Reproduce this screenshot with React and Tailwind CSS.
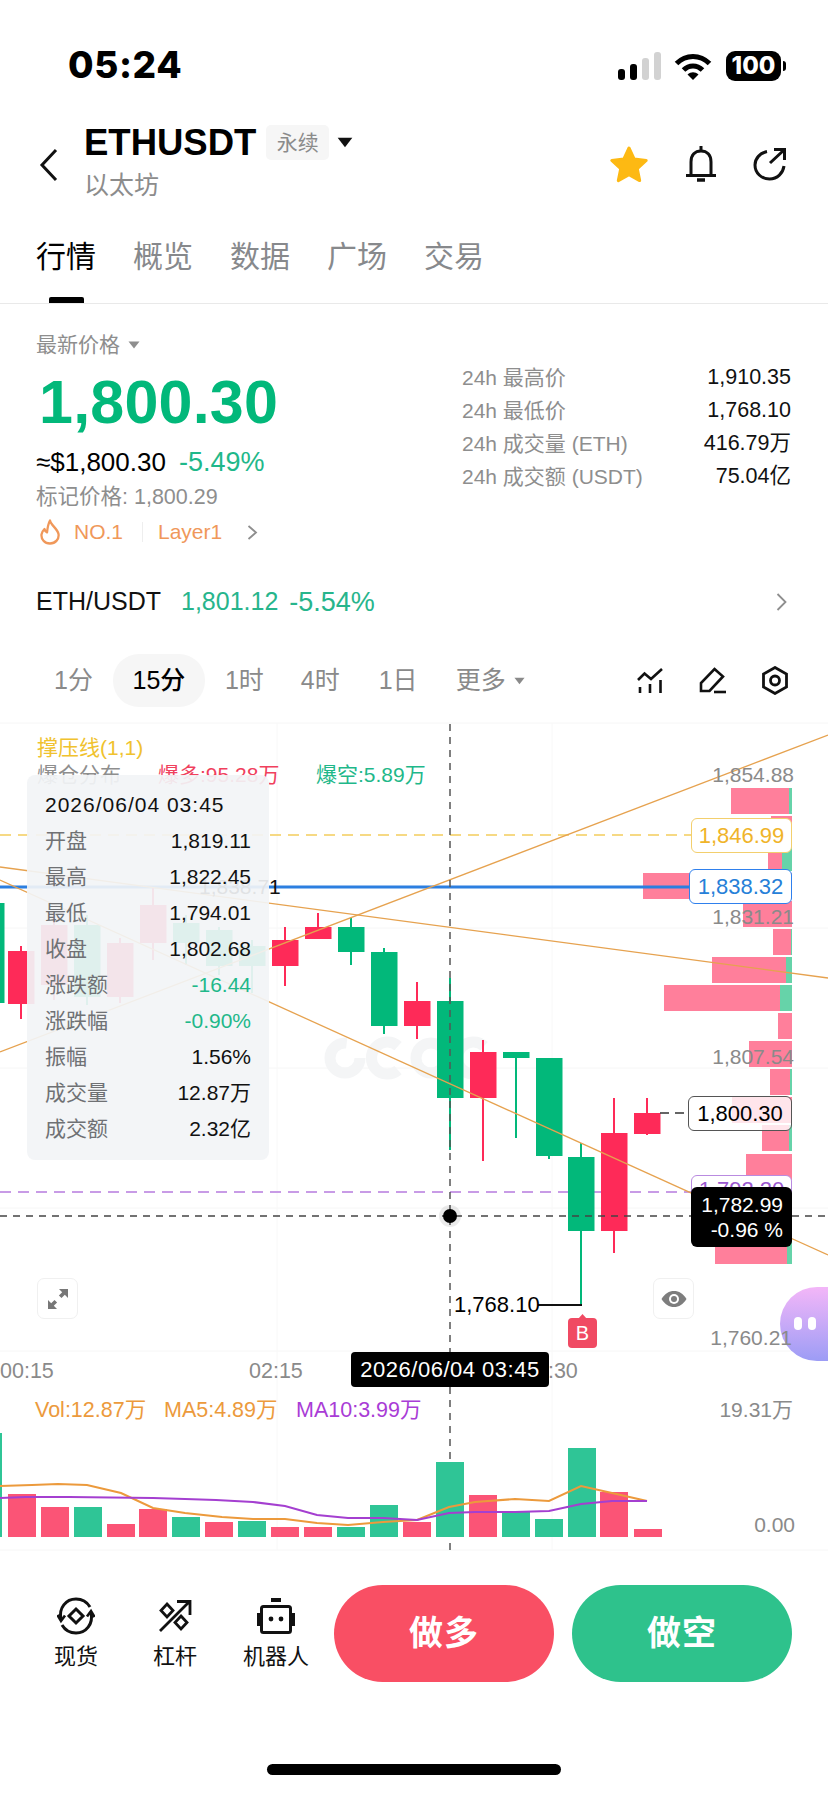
import React from 'react';

const FONT = "font-['Liberation_Sans','Noto_Sans_CJK_SC',sans-serif]";

const RED = '#fe2a58';
const GREEN = '#02b87a';

// x, bodyTop, bodyBottom, wickTop, wickBottom, colour
const candles = [
  [-22, 903, 1003, 890, 1020, GREEN],
  [8, 951, 1004, 946, 1019, RED],
  [41, 925, 985, 915, 1000, RED],
  [74, 925, 997, 915, 1005, GREEN],
  [107, 943, 997, 938, 1003, RED],
  [140, 905, 943, 887, 960, RED],
  [173, 923, 943, 915, 965, GREEN],
  [206, 930, 966, 927, 975, GREEN],
  [239, 946, 966, 940, 993, GREEN],
  [272, 940, 966, 927, 986, RED],
  [305, 927, 939, 913, 939, RED],
  [338, 927, 952, 918, 965, GREEN],
  [371, 952, 1026, 948, 1034, GREEN],
  [404, 1001, 1026, 982, 1039, RED],
  [437, 1001, 1098, 978, 1150, GREEN],
  [470, 1052, 1098, 1040, 1161, RED],
  [503, 1052, 1058, 1052, 1138, GREEN],
  [536, 1058, 1156, 1058, 1159, GREEN],
  [568, 1157, 1231, 1143, 1305, GREEN],
  [601, 1133, 1231, 1098, 1253, RED],
  [634, 1113, 1134, 1098, 1135, RED],
];

// top, pink start x, green start x
const depthBars = [
  [788, 731, 789],
  [816, 771, 792],
  [845, 768, 782],
  [873, 643, 792],
  [901, 743, 792],
  [929, 773, 791],
  [957, 712, 786],
  [985, 664, 780],
  [1013, 778, 792],
  [1041, 749, 792],
  [1069, 770, 790],
  [1097, 732, 792],
  [1125, 762, 789],
  [1154, 746, 792],
  [1238, 715, 787],
];

// x, top, colour
const volumes = [
  [-26, 1433, 'g'], [8, 1494, 'r'], [41, 1507, 'r'], [74, 1507, 'g'], [107, 1524, 'r'],
  [139, 1509, 'r'], [172, 1517, 'g'], [205, 1522, 'r'], [238, 1521, 'g'], [271, 1527, 'r'],
  [304, 1527, 'r'], [337, 1527, 'g'], [370, 1505, 'g'], [403, 1522, 'r'], [436, 1462, 'g'],
  [469, 1495, 'r'], [502, 1512, 'g'], [535, 1519, 'g'], [568, 1448, 'g'], [600, 1492, 'r'],
  [634, 1529, 'r'],
];

const ma5 = '0,1486 32,1485 58,1484 87,1485 121,1493 153,1508 185,1513 222,1517 253,1519 285,1519 317,1523 348,1525 383,1522 417,1520 449,1507 475,1502 515,1499 549,1501 581,1486 612,1493 647,1501';
const ma10 = '0,1498 26,1497 69,1497 153,1498 185,1499 216,1500 253,1502 285,1506 317,1515 348,1518 383,1518 417,1520 449,1513 475,1512 515,1512 549,1511 581,1504 612,1501 647,1501';

const tooltipRows = [
  ['开盘', '1,819.11', 'text-[#111]'],
  ['最高', '1,822.45', 'text-[#111]'],
  ['最低', '1,794.01', 'text-[#111]'],
  ['收盘', '1,802.68', 'text-[#111]'],
  ['涨跌额', '-16.44', 'text-[#1fb88a]'],
  ['涨跌幅', '-0.90%', 'text-[#1fb88a]'],
  ['振幅', '1.56%', 'text-[#111]'],
  ['成交量', '12.87万', 'text-[#111]'],
  ['成交额', '2.32亿', 'text-[#111]'],
];

const stats = [
  ['24h 最高价', '1,910.35'],
  ['24h 最低价', '1,768.10'],
  ['24h 成交量 (ETH)', '416.79万'],
  ['24h 成交额 (USDT)', '75.04亿'],
];

const Caret = ({ className, fill }) => (
  <svg viewBox="0 0 12 8" className={className}>
    <path d="M0.5 0.5h11L6 7.5z" fill={fill} />
  </svg>
);

const StatusBar = () => (
  <div className="flex h-[104px] items-start justify-between pl-[68px] pr-[42px] pt-[50px]">
    <span className="font-['Inter',sans-serif] text-[37px] leading-[30px] font-extrabold tracking-[0.6px] text-black">05:24</span>
    <div className="flex items-center gap-[14px] pt-[1px]">
      <svg viewBox="0 0 44 28" className="mr-[-2px] h-[28px] w-[44px]">
        <rect x="0" y="17" width="7" height="11" rx="3" fill="#000" />
        <rect x="12" y="12" width="7" height="16" rx="3" fill="#000" />
        <rect x="24" y="6" width="7" height="22" rx="3" fill="#d2d2d2" />
        <rect x="36" y="0" width="7" height="28" rx="3" fill="#d2d2d2" />
      </svg>
      <svg viewBox="0 0 38 27" className="h-[27px] w-[38px]">
        <path d="M2.5 10.5C12 1 26 1 35.5 10.5" fill="none" stroke="#000" strokeWidth="5" />
        <path d="M9.5 17C15 11.5 23 11.5 28.5 17" fill="none" stroke="#000" strokeWidth="5" />
        <path d="M13.5 21.5C17 18.5 21 18.5 24.5 21.5L19 27z" fill="#000" />
      </svg>
      <div className="flex items-center gap-[2px]">
        <div className="flex h-[30px] w-[55px] items-center justify-center rounded-[9px] bg-black font-['Inter',sans-serif] text-[24px] leading-none font-extrabold text-white">100</div>
        <div className="h-[10px] w-[3px] rounded-r-full bg-black" />
      </div>
    </div>
  </div>
);

const Header = () => (
  <div className="flex h-[116px] items-start pt-[20px] pl-[39px] pr-[41px]">
    <svg viewBox="0 0 19 34" className="mt-[24px] h-[34px] w-[19px] shrink-0">
      <path d="M17 2 3 17l14 15" fill="none" stroke="#111" strokeWidth="3" />
    </svg>
    <div className="ml-[26px] flex flex-col">
      <div className="flex h-[37px] items-center">
        <span className="text-[36.500px] leading-[37px] font-bold text-black">ETHUSDT</span>
        <span className="ml-[10px] flex h-[35px] w-[63px] items-center justify-center rounded-[5px] bg-[#f6f6f6] text-[21px] text-[#8b8b8b]">永续</span>
        <Caret className="ml-[8px] h-[11px] w-[16px]" fill="#111" />
      </div>
      <span className="mt-[9px] text-[25px] leading-[30px] text-[#8c8c8c]">以太坊</span>
    </div>
    <div className="ml-auto mt-[21px] flex items-center gap-[36px]">
      <svg viewBox="0 0 40 38" className="h-[38px] w-[40px]">
        <path d="M20 3l5.2 11.1 12 1.4-8.9 8.2 2.4 11.9L20 29.7 9.3 35.6l2.4-11.9-8.9-8.2 12-1.4z" fill="#fdb913" stroke="#fdb913" strokeWidth="3" strokeLinejoin="round" />
      </svg>
      <svg viewBox="0 0 32 38" className="h-[38px] w-[32px]">
        <path d="M6 30V17C6 10 10 6 16 6s10 4 10 11v13" fill="none" stroke="#111" strokeWidth="3" />
        <path d="M1 30.5h30M16 1v5" fill="none" stroke="#111" strokeWidth="3" />
        <path d="M12 35h8" fill="none" stroke="#111" strokeWidth="3.5" />
      </svg>
      <svg viewBox="0 0 34 34" className="h-[34px] w-[34px]">
        <path d="M14 4.5C7 6 2 11.500 2 18c0 8 6.500 14 14.500 14S30 26 31 19" fill="none" stroke="#111" strokeWidth="3" />
        <path d="M17 16 31 3M21 2.500h10.500V13" fill="none" stroke="#111" strokeWidth="3" />
      </svg>
    </div>
  </div>
);

const Tabs = () => (
  <div className="relative flex h-[84px] items-start gap-[37px] border-b border-[#e9e9e9] pl-[36px] pt-[17px]">
    <span className="text-[30px] leading-[40px] text-black">行情</span>
    {['概览', '数据', '广场', '交易'].map((t) => (
      <span key={t} className="text-[30px] leading-[40px] text-[#87898c]">{t}</span>
    ))}
    <div className="absolute bottom-0 left-[49px] h-[6px] w-[35px] rounded-t-[2px] bg-black" />
  </div>
);

const Summary = () => (
  <div className="flex h-[276px] items-start justify-between pl-[36px] pr-[37px]">
    <div className="flex flex-col pt-[29px]">
      <div className="flex h-[24px] items-center gap-[8px]">
        <span className="text-[21px] leading-[24px] text-[#8e8e8e]">最新价格</span>
        <Caret className="h-[8px] w-[12px]" fill="#8e8e8e" />
      </div>
      <span className="mt-[10px] ml-[3px] text-[61px] leading-[70px] font-bold tracking-[0.2px] text-[#02b87a]">1,800.30</span>
      <div className="mt-[10px] flex h-[30px] items-center gap-[13px] text-[26px]">
        <span className="text-black">≈$1,800.30</span>
        <span className="text-[27px] text-[#1fb88a]">-5.49%</span>
      </div>
      <span className="mt-[6px] text-[21.500px] leading-[28px] text-[#8e8e8e]">标记价格: 1,800.29</span>
      <div className="mt-[6px] flex h-[30px] items-center text-[21px] text-[#f0985a]">
        <svg viewBox="0 0 22 26" className="ml-[3px] h-[26px] w-[22px]">
          <path d="M11 1.500c1 5 7.500 8 8.500 13.500.8 5-3 9.500-8.500 9.500S2 20 2.500 15.500c.3-2.500 1.500-4 3-5.500.5 2 1 3 2.500 3.500C8.500 9 9 5 11 1.500z" fill="none" stroke="#f0985a" strokeWidth="2.300" strokeLinejoin="round" />
        </svg>
        <span className="ml-[13px]">NO.1</span>
        <div className="ml-[19px] h-[20px] w-px bg-[#eeeeee]" />
        <span className="ml-[15px]">Layer1</span>
        <svg viewBox="0 0 11 15" className="ml-[25px] h-[15px] w-[11px]">
          <path d="M1.500 1 9 7.500 1.500 14" fill="none" stroke="#8e8e8e" strokeWidth="1.800" />
        </svg>
      </div>
    </div>
    <div className="flex w-[329px] flex-col pt-[57px]">
      {stats.map(([label, value]) => (
        <div key={label} className="flex h-[33px] items-center justify-between">
          <span className="text-[21px] text-[#8e8e8e]">{label}</span>
          <span className="text-[21.500px] text-[#111]">{value}</span>
        </div>
      ))}
    </div>
  </div>
);

const SpotRow = () => (
  <div className="flex h-[44px] items-center pl-[36px] pr-[41px] text-[25px]">
    <span className="font-medium text-[#111]">ETH/USDT</span>
    <span className="ml-[20px] text-[#27b58c]">1,801.12</span>
    <span className="ml-[11px] text-[27px] text-[#27b58c]">-5.54%</span>
    <svg viewBox="0 0 11 18" className="ml-auto h-[18px] w-[11px]">
      <path d="M1.500 1 9.500 9l-8 8" fill="none" stroke="#8e8e8e" strokeWidth="1.800" />
    </svg>
  </div>
);

const Timeframes = () => (
  <div className="mt-[30px] flex h-[53px] items-center pr-[40px] text-[25px] text-[#8a8a8a]">
    <span className="ml-[54px]">1分</span>
    <span className="ml-[20px] flex h-[53px] w-[92px] items-center justify-center rounded-[26px] bg-[#f6f6f6] font-medium text-black">15分</span>
    <span className="ml-[20px]">1时</span>
    <span className="ml-[37px]">4时</span>
    <span className="ml-[39px]">1日</span>
    <span className="ml-[38px]">更多</span>
    <Caret className="ml-[8px] h-[8px] w-[11px]" fill="#8a8a8a" />
    <div className="ml-auto flex items-center gap-[36px]">
      <svg viewBox="0 0 26 26" className="h-[26px] w-[26px]">
        <path d="M1 12 7.500 5.500 14 11 25 1" fill="none" stroke="#111" strokeWidth="2.600" />
        <path d="M3 19v6M13 16v9M23.500 12v13" fill="none" stroke="#111" strokeWidth="2.600" />
      </svg>
      <svg viewBox="0 0 27 27" className="h-[27px] w-[27px]">
        <path d="M15.500 2 24 9.500 10.500 24H2v-8z" fill="none" stroke="#111" strokeWidth="2.600" />
        <path d="M15 25h12" fill="none" stroke="#111" strokeWidth="2.600" />
      </svg>
      <svg viewBox="0 0 26 29" className="h-[29px] w-[26px]">
        <path d="M13 1.500 24.500 8v13L13 27.500 1.500 21V8z" fill="none" stroke="#111" strokeWidth="2.800" />
        <circle cx="13" cy="14.500" r="4.500" fill="none" stroke="#111" strokeWidth="2.800" />
      </svg>
    </div>
  </div>
);

const ChartDrawing = () => (
  <svg viewBox="0 722 828 830" className="absolute inset-0 h-[830px] w-[828px]">
    {/* grid */}
    {[723, 928, 1068, 1208, 1351, 1550].map((y) => (
      <line key={y} x1="0" x2="828" y1={y} y2={y} stroke="#f6f6f6" strokeWidth="1" />
    ))}
    {[277, 552].map((x) => (
      <line key={x} x1={x} x2={x} y1="723" y2="1550" stroke="#f8f8f8" strokeWidth="1" />
    ))}

    {/* watermark */}
    <g fill="none" stroke="#f4f5f6" strokeWidth="11">
      <circle cx="345" cy="1058" r="15" strokeDasharray="72 22" />
      <path d="M398 1046a16 16 0 1 0 0 24" />
      <circle cx="431" cy="1058" r="15" />
      <path d="M484 1046a16 16 0 1 0 0 24" />
    </g>

    {/* liquidation depth */}
    {depthBars.map(([top, x, gx]) => (
      <g key={top}>
        <rect x={x} y={top} width={gx - x} height="26" fill="#ff7f9b" />
        <rect x={gx} y={top} width={792 - gx} height="26" fill="#66d3a9" />
      </g>
    ))}

    {/* level lines */}
    <line x1="0" x2="691" y1="835" y2="835" stroke="#f4cd5c" strokeWidth="1.500" strokeDasharray="11 7" />
    <line x1="0" x2="691" y1="1192" y2="1192" stroke="#c89be6" strokeWidth="2" strokeDasharray="11 7" />
    <line x1="0" x2="690" y1="887" y2="887" stroke="#2c7fe0" strokeWidth="3" />

    {/* candles */}
    {candles.map(([x, top, bottom, wickTop, wickBottom, color]) => (
      <g key={x}>
        <line x1={x + 13} x2={x + 13} y1={wickTop} y2={wickBottom} stroke={color} strokeWidth="2" />
        <rect x={x} y={top} width="26.500" height={bottom - top} fill={color} />
      </g>
    ))}

    {/* support / resistance */}
    <g stroke="#e6a24f" strokeWidth="1.300">
      <line x1="0" y1="1052" x2="828" y2="735" />
      <line x1="0" y1="867" x2="828" y2="978" />
      <line x1="0" y1="880" x2="828" y2="1255" />
    </g>

    {/* crosshair */}
    <line x1="450" x2="450" y1="724" y2="1550" stroke="#555" strokeWidth="1.500" strokeDasharray="7 6" />
    <line x1="0" x2="691" y1="1216" y2="1216" stroke="#444" strokeWidth="1.500" strokeDasharray="7 6" />
    <line x1="792" x2="828" y1="1216" y2="1216" stroke="#444" strokeWidth="1.500" strokeDasharray="7 6" />
    <circle cx="450" cy="1216" r="11" fill="#000" fillOpacity="0.08" />
    <circle cx="450" cy="1216" r="7" fill="#000" />

    {/* last price leader and low marker */}
    <line x1="660" x2="688" y1="1113" y2="1113" stroke="#333" strokeWidth="1.500" strokeDasharray="9 6" />
    <line x1="538" x2="582" y1="1305" y2="1305" stroke="#111" strokeWidth="2" />
    <path d="M578 1319l4.500-5 4.500 5z" fill="#f04a63" />

    {/* volume */}
    {volumes.map(([x, top, c]) => (
      <rect key={x} x={x} y={top} width="28" height={1537 - top} fill={c === 'g' ? '#2fc596' : '#fb5476'} />
    ))}
    <polyline points={ma5} fill="none" stroke="#ec9a3c" strokeWidth="2" />
    <polyline points={ma10} fill="none" stroke="#a43fd0" strokeWidth="2" />
  </svg>
);

const Tooltip = () => (
  <div className="absolute left-[27px] top-[53px] h-[385px] w-[242px] rounded-[8px] bg-[#f2f4f6]/92 px-[18px] pt-[12px]">
    <div className="h-[36px] text-[21px] leading-[36px] tracking-[1px] text-[#111]">2026/06/04 03:45</div>
    {tooltipRows.map(([label, value, color]) => (
      <div key={label} className="flex h-[36px] items-center justify-between">
        <span className="text-[21px] text-[#6f7174]">{label}</span>
        <span className={`text-[21px] ${color}`}>{value}</span>
      </div>
    ))}
  </div>
);

const Chart = () => (
  <div className="relative mt-[15px] h-[830px] w-[828px]">
    <ChartDrawing />

    <span className="absolute left-[37px] top-[14px] text-[21px] leading-[24px] text-[#f0c22e]">撑压线(1,1)</span>
    <span className="absolute left-[37px] top-[41px] text-[21px] leading-[24px] text-[#8e8e8e]">爆仓分布</span>
    <span className="absolute left-[158px] top-[41px] text-[21px] leading-[24px] text-[#f0405d]">爆多:95.28万</span>
    <span className="absolute left-[316px] top-[41px] text-[21px] leading-[24px] text-[#1fb88a]">爆空:5.89万</span>

    <span className="absolute left-[199px] top-[153px] text-[21px] leading-[24px] text-[#111]">1,838.71</span>

    <Tooltip />

    <span className="absolute right-[34px] top-[41px] text-[21px] leading-[24px] text-[#8a8a8a]">1,854.88</span>
    <span className="absolute right-[34px] top-[183px] text-[21px] leading-[24px] text-[#8a8a8a]">1,831.21</span>
    <span className="absolute right-[34px] top-[323px] text-[21px] leading-[24px] text-[#8a8a8a]">1,807.54</span>

    <div className="absolute left-[691px] top-[96px] flex h-[35px] w-[101px] items-center justify-center rounded-[6px] border border-[#f3cf6d] bg-white text-[22px] text-[#f0b429]">1,846.99</div>
    <div className="absolute left-[689px] top-[147px] flex h-[35px] w-[103px] items-center justify-center rounded-[6px] border border-[#2f80ed] bg-white text-[22px] text-[#2680d8]">1,838.32</div>
    <div className="absolute left-[688px] top-[374px] flex h-[35px] w-[104px] items-center justify-center rounded-[6px] border border-[#555] bg-white/80 text-[22px] text-black">1,800.30</div>
    <div className="absolute left-[691px] top-[453px] flex h-[30px] w-[101px] items-start justify-center rounded-[6px] border border-[#b98be0] bg-white pt-[2px] text-[22px] leading-[24px] text-[#9b59d0]">1,792.20</div>
    <div className="absolute left-[691px] top-[465px] flex h-[60px] w-[101px] flex-col items-end justify-center rounded-[6px] bg-black pr-[9px] text-[21px] leading-[25px] text-white">
      <span>1,782.99</span>
      <span>-0.96 %</span>
    </div>

    <span className="absolute left-[454px] top-[571px] text-[22px] leading-[24px] text-black">1,768.10</span>
    <div className="absolute left-[568px] top-[596px] flex h-[30px] w-[29px] items-center justify-center rounded-[4px] bg-[#f04a63] text-[20px] text-white">B</div>

    <div className="absolute left-[37px] top-[556px] flex h-[41px] w-[41px] items-center justify-center rounded-[7px] border border-[#f0f0f0] bg-white">
      <svg viewBox="0 0 22 22" className="h-[22px] w-[22px]">
        <path d="M21 1v9l-3.200-3.200-3.300 3.300-2.600-2.600 3.300-3.300L12 1zM1 21v-9l3.200 3.200 3.300-3.300 2.600 2.600-3.300 3.300L10 21z" fill="#777" />
      </svg>
    </div>
    <div className="absolute left-[653px] top-[556px] flex h-[41px] w-[41px] items-center justify-center rounded-[7px] border border-[#f0f0f0] bg-white">
      <svg viewBox="0 0 26 18" className="h-[18px] w-[26px]">
        <path d="M0.500 9C4 3.500 8 1 13 1s9 2.500 12.500 8C22 14.500 18 17 13 17S4 14.500 0.500 9z" fill="#7d7d7d" />
        <circle cx="13" cy="9" r="5" fill="#fff" />
        <circle cx="13" cy="9" r="3" fill="#7d7d7d" />
      </svg>
    </div>

    <div className="absolute left-[780px] top-[565px] h-[74px] w-[48px] rounded-l-[37px] bg-linear-to-b from-[#f3b6f8] to-[#9c9cf5]" />
    <div className="absolute left-[794px] top-[595px] h-[13px] w-[8px] rounded-full bg-white" />
    <div className="absolute left-[808px] top-[595px] h-[13px] w-[8px] rounded-full bg-white" />
    <span className="absolute right-[36px] top-[604px] text-[21px] leading-[24px] text-[#8a8a8a]">1,760.21</span>

    <span className="absolute left-0 top-[637px] text-[21.500px] leading-[24px] text-[#8a8a8a]">00:15</span>
    <span className="absolute left-[249px] top-[637px] text-[21.500px] leading-[24px] text-[#8a8a8a]">02:15</span>
    <span className="absolute left-[524px] top-[637px] text-[21.500px] leading-[24px] text-[#8a8a8a]">04:30</span>
    <div className="absolute left-[351px] top-[630px] flex h-[35px] w-[198px] items-center justify-center rounded-[4px] bg-black text-[22px] tracking-[0.5px] text-white">2026/06/04 03:45</div>

    <span className="absolute left-[35px] top-[676px] text-[21.500px] leading-[24px] text-[#ec9a3c]">Vol:12.87万</span>
    <span className="absolute left-[164px] top-[676px] text-[21.500px] leading-[24px] text-[#ec9a3c]">MA5:4.89万</span>
    <span className="absolute left-[296px] top-[676px] text-[21.500px] leading-[24px] text-[#a93cd6]">MA10:3.99万</span>
    <span className="absolute right-[35px] top-[676px] text-[21px] leading-[24px] text-[#8a8a8a]">19.31万</span>
    <span className="absolute right-[33px] top-[791px] text-[21px] leading-[24px] text-[#8a8a8a]">0.00</span>
  </div>
);

const ActionItem = ({ label, className, children }) => (
  <div className={`flex w-[98px] flex-col items-center ${className ?? ''}`}>
    <div className="flex h-[38px] items-center justify-center">{children}</div>
    <span className="mt-[9px] text-[22px] leading-[26px] text-[#111]">{label}</span>
  </div>
);

const BottomBar = () => (
  <div className="mt-[33px] flex h-[97px] items-center pl-[27px]">
    <ActionItem label="现货">
      <svg viewBox="0 0 38 38" className="h-[38px] w-[38px]">
        <path d="M4 22C1.500 11 9 2 19 2c6 0 11 3 14 8" fill="none" stroke="#111" strokeWidth="3" />
        <path d="M34 16c2.500 11-5 20-15 20-6 0-11-3-14-8" fill="none" stroke="#111" strokeWidth="3" />
        <path d="M0.500 18 4 24l4-5.500M37.500 20 34 14l-4 5.500" fill="none" stroke="#111" strokeWidth="2.600" />
        <path d="M19 12l7 7-7 7-7-7z" fill="none" stroke="#111" strokeWidth="3" />
      </svg>
    </ActionItem>
    <ActionItem label="杠杆" className="ml-[1px]">
      <svg viewBox="0 0 34 34" className="h-[34px] w-[34px]">
        <path d="M2 32 31 3M19 2.500h13V16" fill="none" stroke="#111" strokeWidth="2.800" />
        <path d="M9 5l6 6.500L9 18l-6-6.500zM23 17l6 6.500L23 30l-6-6.500z" fill="none" stroke="#111" strokeWidth="2.800" />
      </svg>
    </ActionItem>
    <ActionItem label="机器人" className="ml-[3px]">
      <svg viewBox="0 0 38 36" className="h-[36px] w-[38px]">
        <path d="M14 2h10" fill="none" stroke="#111" strokeWidth="4" />
        <rect x="4.500" y="8.500" width="29" height="26" rx="2" fill="none" stroke="#111" strokeWidth="3" />
        <path d="M1.500 15v13M36.500 15v13" fill="none" stroke="#111" strokeWidth="3" />
        <circle cx="14" cy="21" r="2.400" fill="#111" />
        <circle cx="24" cy="21" r="2.400" fill="#111" />
      </svg>
    </ActionItem>
    <button className="ml-[9px] flex h-[97px] w-[220px] items-center justify-center rounded-full bg-[#f94f64] text-[34px] font-bold tracking-[1px] text-white">做多</button>
    <button className="ml-[18px] flex h-[97px] w-[220px] items-center justify-center rounded-full bg-[#2ec28c] text-[34px] font-bold tracking-[1px] text-white">做空</button>
  </div>
);

export default function App() {
  return (
    <div className={`${FONT} relative h-[1793px] w-[828px] overflow-hidden bg-white`}>
      <StatusBar />
      <Header />
      <Tabs />
      <Summary />
      <SpotRow />
      <Timeframes />
      <Chart />
      <BottomBar />
      <div className="mx-auto mt-[82px] h-[11px] w-[294px] rounded-full bg-black" />
    </div>
  );
}
